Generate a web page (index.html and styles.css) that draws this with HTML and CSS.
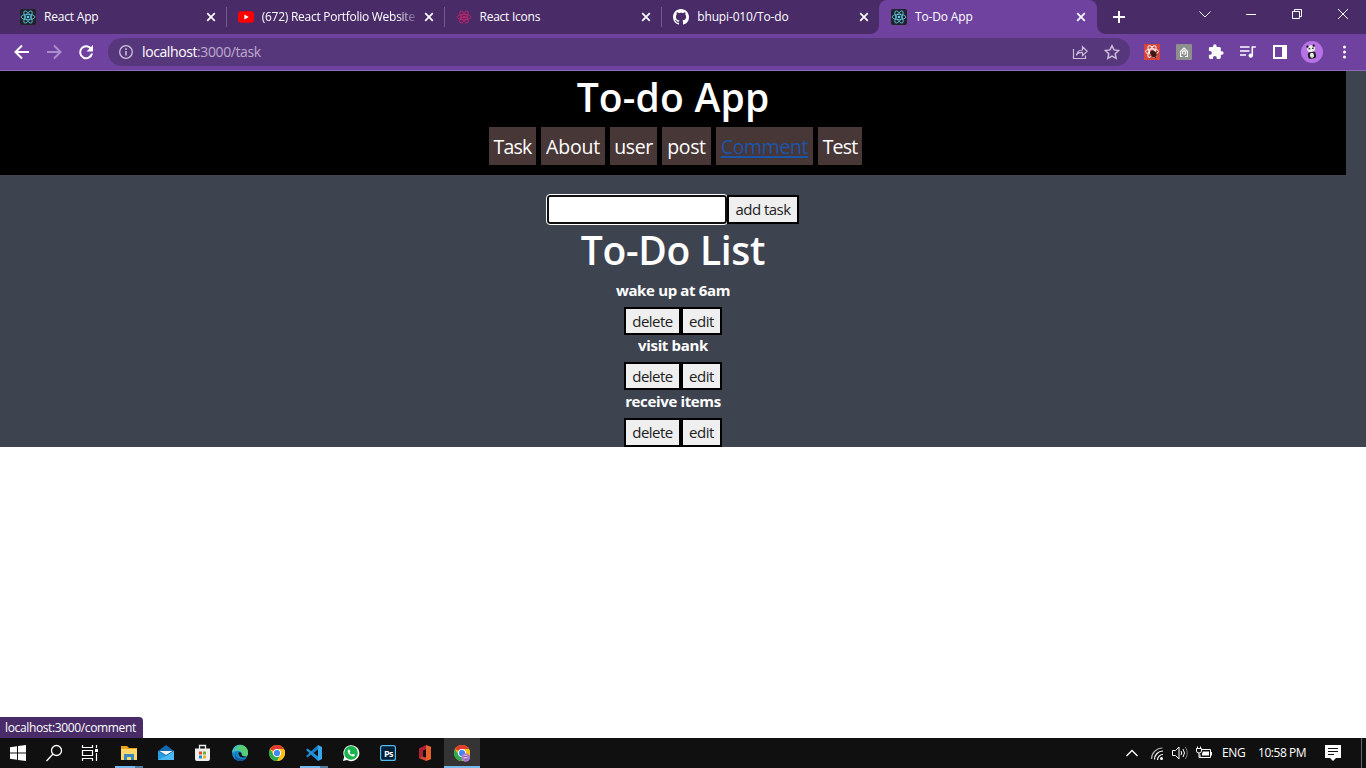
FILE: index.html
```html
<!DOCTYPE html>
<html lang="en">
<head>
<meta charset="utf-8">
<title>To-Do App</title>
<link rel="stylesheet" href="styles.css">
</head>
<body>
<svg class="defs" width="0" height="0">
  <defs>
    <symbol id="atom" viewBox="0 0 16 16"><g fill="none" stroke="currentColor" stroke-width=".8"><ellipse cx="8" cy="8" rx="6.900" ry="2.700"/><ellipse cx="8" cy="8" rx="6.900" ry="2.700" transform="rotate(60 8 8)"/><ellipse cx="8" cy="8" rx="6.900" ry="2.700" transform="rotate(120 8 8)"/></g><circle cx="8" cy="8" r="1.300" fill="currentColor"/></symbol>
    <symbol id="close" viewBox="0 0 10 10"><path d="M1.200 1.200l7.600 7.600M8.800 1.200L1.200 8.800" stroke="#fff" stroke-width="1.700" fill="none"/></symbol>
    <symbol id="chrome" viewBox="0 0 16 16"><circle cx="8" cy="8" r="8" fill="#fbc116"/><path d="M8 8L1.070 4A8 8 0 0 1 14.930 4z" fill="#e33b2e"/><path d="M1.070 4A8 8 0 0 0 8 16l3.400-6L8 8 4.600 10z" fill="#2da94f"/><path d="M8 4h6.930A8 8 0 0 1 8 16l3.500-6z" fill="#fbc116"/><circle cx="8" cy="8" r="4" fill="#fff"/><circle cx="8" cy="8" r="3.100" fill="#4285f4"/></symbol>
  </defs>
</svg>

<header class="tabs">
  <div class="tab"><svg class="fav react"><use href="#atom"/></svg><span class="title t1">React App</span><svg class="x"><use href="#close"/></svg></div>
  <div class="tab"><svg class="fav" viewBox="0 0 16 16"><rect y="2.200" width="16" height="11.600" rx="2.800" fill="#f00"/><path d="M6.400 5.500v5L10.700 8z" fill="#fff"/></svg><span class="title t2">(672) React Portfolio Website</span><svg class="x"><use href="#close"/></svg></div>
  <div class="tab"><svg class="fav pink"><use href="#atom"/></svg><span class="title t3">React Icons</span><svg class="x"><use href="#close"/></svg></div>
  <div class="tab last"><svg class="fav" viewBox="0 0 16 16"><path fill="#fff" d="M8 0C3.580 0 0 3.580 0 8c0 3.540 2.290 6.530 5.470 7.590.4.070.55-.17.55-.38 0-.19-.01-.82-.01-1.490-2.010.37-2.530-.49-2.690-.94-.09-.23-.48-.94-.82-1.130-.28-.15-.68-.52-.01-.53.63-.01 1.080.58 1.230.82.72 1.210 1.870.87 2.330.66.07-.52.28-.87.51-1.070-1.780-.2-3.640-.89-3.640-3.950 0-.87.31-1.590.82-2.150-.08-.2-.36-1.020.08-2.120 0 0 .67-.21 2.200.82.64-.18 1.320-.27 2-.27s1.360.09 2 .27c1.530-1.040 2.200-.82 2.200-.82.44 1.100.16 1.920.08 2.120.51.56.82 1.270.82 2.150 0 3.070-1.870 3.750-3.650 3.950.29.25.54.73.54 1.480 0 1.070-.01 1.930-.01 2.200 0 .21.15.46.55.38A8.010 8.010 0 0 0 16 8c0-4.420-3.580-8-8-8z"/></svg><span class="title t4">bhupi-010/To-do</span><svg class="x"><use href="#close"/></svg></div>
  <div class="tab active"><svg class="fav react"><use href="#atom"/></svg><span class="title t5">To-Do App</span><svg class="x"><use href="#close"/></svg></div>
  <svg class="plus" viewBox="0 0 12 12"><path d="M6 0v12M0 6h12" stroke="#fff" stroke-width="2"/></svg>
  <svg class="winctl" width="166" height="28" viewBox="1195 0 166 28" fill="none" stroke="#fff"><path d="M1199.500 11.500l5.500 5.500 5.500-5.500M1246 14.500h10M1292.500 11.500h7v7h-7zM1294.500 11.500v-2h7v7h-2M1338 9l10 10M1348 9l-10 10"/></svg>
</header>

<nav class="toolbar">
  <svg class="arrows" width="100" height="36" viewBox="0 34 100 36" fill="none" stroke="#fff" stroke-width="2"><path d="M29 52H16M22 45.500L15.500 52l6.500 6.500"/><path d="M47 52h13M54 45.500l6.500 6.500-6.500 6.500" stroke="#aa8dcc"/><path d="M91.300 49.200A6 6 0 1 0 92 53.500"/><path d="M93 45v6.500h-6.500z" fill="#fff" stroke="none"/></svg>
  <div class="omnibox">
    <svg width="14" height="14" viewBox="0 0 14 14" fill="none" stroke="#cfc1df"><circle cx="7" cy="7" r="6.300" stroke-width="1.300"/><path d="M7 6v4.500M7 3.300v1.600" stroke-width="1.500"/></svg>
    <span class="url"><b>localhost</b>:3000/task</span>
    <svg class="omni-icons" width="50" height="20" viewBox="1071 42 50 20" fill="none" stroke="#cbbddb" stroke-width="1.200"><path d="M1073.500 49v9.500h12v-3M1076.500 55.500c.5-4 3-5.500 6-5.500v-3.300l4.700 4.500-4.700 4.500v-3.200c-3-.2-4.500.5-6 2z"/><path stroke-width="1.500" d="M1112 45.700l2 4.200 4.600.6-3.400 3.200.9 4.600-4.100-2.300-4.100 2.300.9-4.600-3.400-3.200 4.600-.6z"/></svg>
  </div>
  <svg class="exts" width="226" height="36" viewBox="1140 34 226 36">
    <rect x="1144" y="44" width="16" height="16" fill="#d7443a"/><g fill="none" stroke="#fff"><ellipse cx="1152" cy="51.500" rx="6.500" ry="2.500"/><ellipse cx="1152" cy="51.500" rx="6.500" ry="2.500" transform="rotate(60 1152 51.500)"/><ellipse cx="1152" cy="51.500" rx="6.500" ry="2.500" transform="rotate(120 1152 51.500)"/></g><ellipse cx="1153.500" cy="54" rx="2.800" ry="3.500" transform="rotate(-40 1153.500 54)" fill="#3b1612"/><path d="M1150 52.500l6 5.500M1157 51.500l-6 6" stroke="#3b1612"/>
    <rect x="1176" y="44" width="16" height="16" rx="1" fill="#8d918d"/><path d="M1182.500 56.500h-2v-5l3.500-3.500 3.500 3.500v5h-2.500M1182.500 54v-2l1.500-1.500 1.500 1.500v2h-2" fill="none" stroke="#fff" stroke-width="1.100"/>
    <path transform="translate(1207.500 43.500) scale(.7)" fill="#fff" d="M20.500 11H19V7c0-1.100-.9-2-2-2h-4V3.500a2.500 2.500 0 0 0-5 0V5H4c-1.100 0-2 .9-2 2v3.800h1.500a2.700 2.700 0 0 1 0 5.400H2V20c0 1.100.9 2 2 2h3.800v-1.500a2.700 2.700 0 0 1 5.400 0V22H17c1.100 0 2-.9 2-2v-4h1.500a2.500 2.500 0 0 0 0-5z"/>
    <path d="M1240 47h9.500M1240 51h9.500M1240 55h6" stroke="#fff" stroke-width="1.500"/><path d="M1252.300 55.500V47h3.500" fill="none" stroke="#fff" stroke-width="1.500"/><circle cx="1250.800" cy="55.600" r="2.200" fill="#fff"/>
    <path d="M1273 45h14v14h-14zm2 2v10h7V47z" fill="#fff" fill-rule="evenodd"/>
    <circle cx="1312" cy="52" r="11" fill="#b772e5"/><g transform="rotate(-8 1312 52)"><ellipse cx="1311.500" cy="48.500" rx="4" ry="3.400" fill="#eee"/><circle cx="1308.300" cy="46" r="1.100"/><circle cx="1314.500" cy="46" r="1.100"/><path d="M1309 48.500h1.700M1312.500 48.500h1.700" stroke="#222" stroke-width="1.300"/><rect x="1307.500" y="52" width="8" height="6.500" rx="2" fill="#222"/><ellipse cx="1311.500" cy="55.300" rx="2" ry="2.500" fill="#eee"/></g>
    <g fill="#fff"><circle cx="1344.500" cy="47" r="1.500"/><circle cx="1344.500" cy="52" r="1.500"/><circle cx="1344.500" cy="57" r="1.500"/></g>
  </svg>
</nav>

<main class="page">
  <section class="app">
    <div class="banner">
      <h1 class="h-app">To-do App</h1>
      <div class="links"><a class="w-task">Task</a><a class="w-about">About</a><a class="w-user">user</a><a class="w-post">post</a><a class="w-comment hover">Comment</a><a class="w-test">Test</a></div>
    </div>
    <div class="content">
      <div class="entry"><input class="field" type="text"><button class="add">add task</button></div>
      <h1 class="h-list">To-Do List</h1>
      <div class="item"><p>wake up at 6am</p><div class="actions"><button class="del">delete</button><button class="edit">edit</button></div></div>
      <div class="item"><p>visit bank</p><div class="actions"><button class="del">delete</button><button class="edit">edit</button></div></div>
      <div class="item"><p>receive items</p><div class="actions"><button class="del">delete</button><button class="edit">edit</button></div></div>
    </div>
  </section>
  <div class="status"><span>localhost:3000/comment</span></div>
</main>

<footer class="taskbar">
  <svg class="apps" width="490" height="30" viewBox="0 738 490 30">
    <path fill="#fff" d="M10 747.300l7-1v6.200h-7zM18 746.100l8-1.200v7.600h-8zM10 753.500h7v6.200l-7-1zM18 753.500h8v7.600l-8-1.200z"/>
    <g fill="none" stroke="#fff" stroke-width="1.300"><circle cx="56.500" cy="750.500" r="5"/><path d="M53 754l-6.500 7"/></g>
    <g fill="none" stroke="#fff" stroke-width="1.200"><path d="M82.500 745v2.500h10V745M82.500 761v-2.500h10v2.500M82.500 750.500h10v5h-10zM96.500 745v3M96.500 753v8"/></g><rect x="95" y="749" width="3" height="3" fill="#fff"/>
    <path d="M121 746h6l2 2h8v12h-16z" fill="#e8a51c"/><path d="M121 749h16v11h-16z" fill="#ffd76b"/><path d="M124 760v-6h10v6h-3v-3h-4v3z" fill="#3988bd"/>
    <rect x="115" y="766" width="20" height="2" fill="#76b9ed"/><rect x="135" y="766" width="8" height="2" fill="#507b9e"/>
    <path d="M158 751l8-6 8 6v9h-16z" fill="#1269ad"/><path d="M159.500 751h13l-6.500 4z" fill="#f3f5f5"/><path d="M158 751l8 5 8-5v9h-16z" fill="#279ee2"/><path d="M158 760l9-4.500 7-4.500v9z" fill="#48baf1"/>
    <path d="M199.500 749v-3.500h6v3.500" fill="none" stroke="#eee" stroke-width="1.300"/><path d="M195 748.500h15v10.500q0 2-2 2h-11q-2 0-2-2z" fill="#eee"/><path d="M199 751.500h3v3h-3z" fill="#e54b25"/><path d="M203 751.500h3v3h-3z" fill="#6caf2e"/><path d="M199 755.500h3v3h-3z" fill="#168fd2"/><path d="M203 755.500h3v3h-3z" fill="#eeb321"/>
    <circle cx="240" cy="753" r="8" fill="#168bcc"/><path d="M232.200 751a8 8 0 0 1 15.800 2c0 3-2.500 4-6 3.500 1-3-.5-5.500-4-5.500-2.500 0-4.500.5-5.800 2z" fill="#45c1bd"/><path d="M240 745a8 8 0 0 1 8 8c0 3-2.500 4-6 3.500 2-4-1-7-6-7z" fill="#57cd70"/><path d="M237 752c-2.500 3-.5 7 5 7 2 0 3.500-.5 4.500-1.300a8 8 0 0 1-6.500 3.300c-5 0-6.500-6-3-9z" fill="#1254a0"/><path d="M238.500 753c0-1 3-1 3 1 0 1.800 2 3 5 2.300-1 2.200-8 2-8-3.300z" fill="#101010"/>
    <use href="#chrome" x="269" y="745" width="16" height="16"/>
    <path d="M318 745l4 2v12l-4 2z" fill="#38a8ec"/><path d="M318 745v4.500l-10.500 8-1.500-1.500z" fill="#1580c8"/><path d="M318 761v-4.500l-10.500-8-1.500 1.500z" fill="#1e91dc"/>
    <rect x="300" y="766" width="20" height="2" fill="#76b9ed"/><rect x="320" y="766" width="8" height="2" fill="#507b9e"/>
    <path d="M343 761l1.200-4.200A8 8 0 1 1 347 759.900z" fill="#fff"/><circle cx="351" cy="752.900" r="6.800" fill="#18b34c"/><path d="M348.500 749.500c-3 3 3.500 8.500 6 6.500.8-1 .3-1.500-1.500-2.200l-1 1c-1-.3-2-1.200-2.400-2.200l.8-1c-.5-1.500-1-2.100-1.900-2.100z" fill="#fff"/>
    <rect x="380.600" y="745.600" width="14.800" height="14.800" rx="2" fill="#001e36" stroke="#54baf0" stroke-width="1.200"/><text class="ps" x="384" y="756.500">Ps</text>
    <path d="M419 748.500l7-3.500v4l-3 1.500v6l-4 2z" fill="#b32035"/><path d="M426 745l5 1.700v12.600l-5 1.700z" fill="#e8632b"/><path d="M419 758l3-1.500 4 1v3.500z" fill="#d44832"/>
    <rect x="444" y="738" width="36" height="30" fill="#343434"/><rect x="444" y="766" width="36" height="2" fill="#76b9ed"/><use href="#chrome" x="454" y="745" width="16" height="16"/><circle cx="465.700" cy="757.500" r="4.300" fill="#b07bd6"/><circle cx="465.500" cy="757" r="2" fill="#d8c6e2"/><path d="M463.500 756.500h4M464.500 759h3" stroke="#6c4a80" stroke-width=".8"/>
  </svg>
  <div class="tray">
    <svg width="110" height="30" viewBox="1110 738 110 30" fill="none" stroke="#fff">
      <path d="M1126.500 756l5.500-5.500 5.500 5.500" stroke-width="1.300"/>
      <g stroke-width="1.200"><path d="M1151.500 759a11 11 0 0 1 11-11" stroke="#aaa"/><path d="M1154.500 759.500a8.500 8.500 0 0 1 8.500-8.500M1157.500 760a5.500 5.500 0 0 1 5.500-5.500"/></g><circle cx="1161.500" cy="758.500" r="1.500" fill="#fff" stroke="none"/>
      <path d="M1172.500 750.500h3l3.500-3.500v12l-3.500-3.500h-3zM1181 751q1.500 2 0 4M1183 749q3 4 0 8"/><path d="M1185.300 747q4 6 0 12" stroke="#777"/>
      <path d="M1202 749.500h8.500v8h-10.500v-3M1211.500 752v3.500"/><path d="M1203 751.500h6v4h-7v-2z" fill="#fff" stroke="none"/><path d="M1196.500 748.500h5v2.500q0 2-2.500 2t-2.500-2zM1197.500 748.500v-2M1200.500 748.500v-2M1199 753v4.500h2"/>
    </svg>
    <span class="lang">ENG</span><span class="clock">10:58 PM</span>
    <svg class="note" width="16" height="16" viewBox="0 0 16 16"><path d="M0 0h16v13h-5l-3 3-3-3H0z" fill="#fff"/><path d="M3 3.500h10M3 6.500h10M3 9.500h6" stroke="#111"/></svg>
    <i class="peek"></i>
  </div>
</footer>
</body>
</html>
```
FILE: styles.css
```css
*{box-sizing:border-box}
body{margin:0;width:1366px;height:768px;overflow:hidden;display:flex;flex-direction:column;background:#fff;font-family:"Open Sans","Noto Sans",sans-serif}
svg{flex:none;display:block}
.defs{position:absolute}
.tabs{height:34px;flex:none;background:#482b67;display:flex;padding-left:8px;align-items:stretch}
.tab{width:217.750px;height:34px;flex:none;display:flex;align-items:center;padding:0 10px 0 12px;position:relative;color:#fff;font-size:12px}
.tab:not(.last):not(.active)::after{content:"";position:absolute;right:-1px;top:7px;width:1px;height:20px;background:#765b91}
.fav{width:16px;height:16px;flex:none;margin-right:8px}
.react{background:#20232a;color:#61cde8;border-radius:2px}
.pink{color:#d22469}
.title{flex:1;white-space:nowrap;overflow:hidden;line-height:18px}
.t1{letter-spacing:-.200px}
.t2{letter-spacing:-.270px;-webkit-mask-image:linear-gradient(90deg,#000 136px,transparent 158px)}
.t3{letter-spacing:-.250px}
.t4{letter-spacing:-.150px}
.t5{letter-spacing:-.150px}
.x{width:10px;height:10px;margin-left:7px}
.active .x{margin-right:1px}
.active{background:#6f42a0;border-radius:8px 8px 0 0}
.active::before,.active::after{content:"";position:absolute;bottom:0;width:8px;height:8px}
.active::before{left:-8px;background:radial-gradient(circle at 0 0,transparent 7.500px,#6f42a0 8px)}
.active::after{right:-8px;background:radial-gradient(circle at 100% 0,transparent 7.500px,#6f42a0 8px)}
.plus{width:12px;height:12px;margin:11px 0 0 16px}
.winctl{margin-left:auto;margin-right:5px}
.toolbar{height:37px;flex:none;background:#6f42a0;border-bottom:1px solid #8e6cb5;display:flex}
.arrows{margin-right:8px}
.omnibox{width:1022px;height:28px;margin-top:4px;border-radius:14px;background:#57377b;display:flex;align-items:center;padding:0 9px 0 11px}
.url{margin-left:9px;font-size:14px;letter-spacing:-.400px;color:#bcaacf;line-height:20px}
.url b{font-weight:400;color:#fff}
.omni-icons{margin-left:auto}
.exts{margin-left:auto}
.page{flex:1;position:relative;background:#fff}
.app{height:376px;background:#3e4350;color:#fff;text-align:center}
.banner{width:1346px;height:104px;background:#000}
h1{margin:0;font-size:39px;font-weight:600;line-height:48px;white-space:nowrap}
.h-app{height:56px;padding-top:2px;letter-spacing:.200px}
.links{display:flex;gap:5px;padding-left:489px}
.links a{height:38px;line-height:40px;background:#483737;font-size:19.500px;white-space:nowrap;display:flex;justify-content:center;letter-spacing:-.400px}
.w-task{width:47px}
.links .w-task,.links .w-test{letter-spacing:-.800px}
.w-about{width:64px}
.links .w-about{letter-spacing:-.200px}
.w-user{width:47px}
.w-post{width:49px}
.w-comment{width:97px}
.w-test{width:44px}
.links .hover{color:#1b54ab;text-decoration:underline;text-decoration-thickness:2px;text-underline-offset:2px}
.content{width:1346px;padding-top:20px}
.entry{display:flex;padding-left:547px;height:29px}
.field{width:180px;height:29px;border:2px solid #101010;border-radius:3px;background:#fff;outline:1px solid #fff;outline-offset:0;padding:0}
button{font-family:"Open Sans",sans-serif;font-size:15px;font-weight:400;color:#222;background:#efefef;border:2px solid #000;border-radius:0;padding:0;height:100%;line-height:24px;white-space:nowrap}
.add{width:72px;letter-spacing:-.520px;padding-bottom:1px}
.h-list{height:55.500px;padding-top:2px;letter-spacing:-.300px}
.item{height:55.700px}
.item p{height:26px;margin:0 0 1px;font-size:15px;font-weight:700;line-height:21px;letter-spacing:-.350px}
.actions{height:28px;display:flex;justify-content:center}
.item:last-child .actions{height:29px}
.del{width:57px;letter-spacing:-.500px}
.edit{width:41px;letter-spacing:-.400px}
.status{position:absolute;left:0;bottom:0;width:143px;height:21px;background:#482b67;color:#fff;border-radius:0 4px 0 0;font-size:12px;line-height:21px;padding-left:5px;letter-spacing:-.360px;white-space:nowrap}
.taskbar{height:30px;flex:none;background:#101010;display:flex;justify-content:space-between;color:#fff}
.ps{font:700 9px "Open Sans",sans-serif;fill:#fff;letter-spacing:-.700px}
.tray{width:256px;display:flex;align-items:center;font-size:12px;white-space:nowrap}
.lang{width:36px;padding-left:2px;letter-spacing:-.400px;position:relative;top:-1px}
.clock{width:67px;padding-left:2px;letter-spacing:-.450px;position:relative;top:-1px}
.note{margin-left:2px}
.peek{width:1px;height:30px;background:#666;margin-left:20px}
```
